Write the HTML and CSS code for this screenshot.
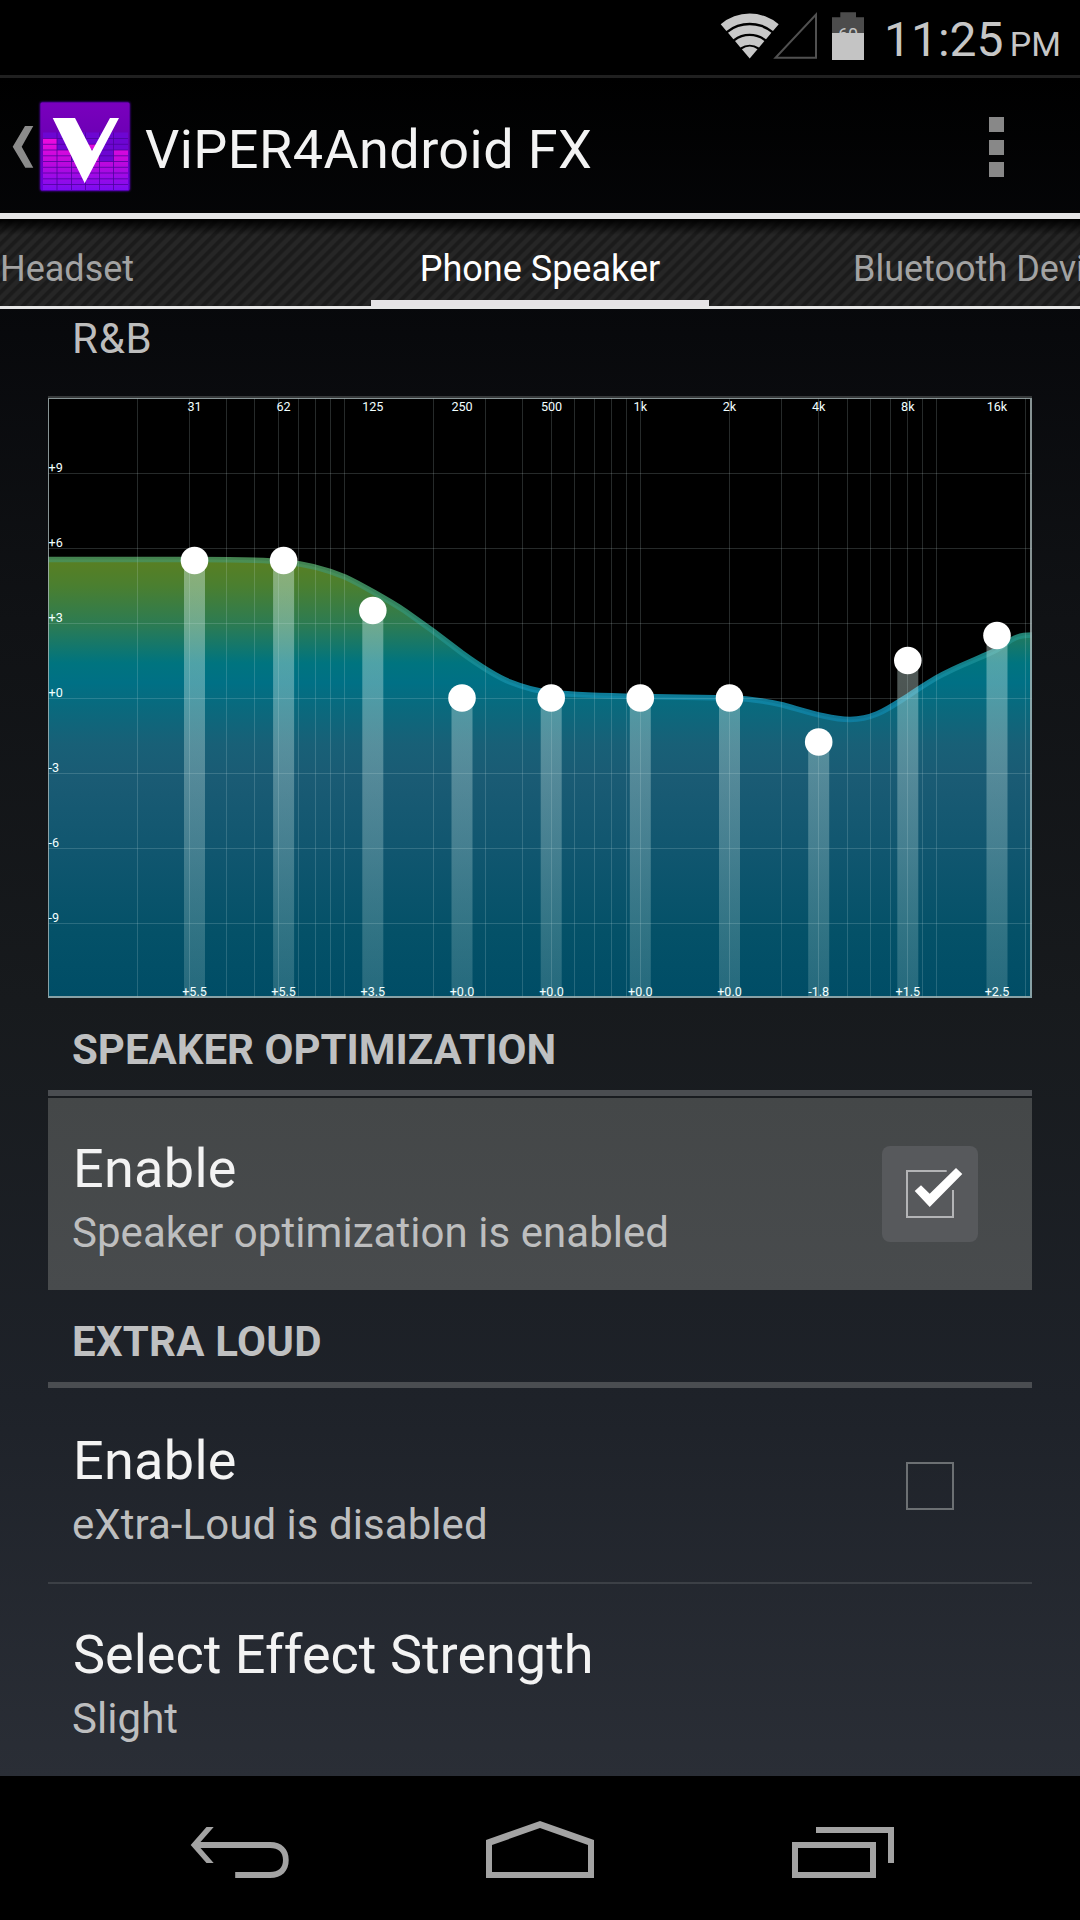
FILE: index.html
```html
<!DOCTYPE html>
<html lang="en">
<head>
<meta charset="utf-8">
<title>ViPER4Android FX</title>
<link rel="stylesheet" href="styles.css">
</head>
<body>
<div class="screen">
  <header class="status-bar">
    <svg class="status-icons" width="150" height="60" viewBox="718 0 150 60">
      <g fill="#c8c8c8">
        <path d="M720.7 24.3A44.5 44.5 0 0 1 778.7 24.3L773 31A37 37 0 0 0 726.4 31Z"/>
        <path d="M728 32.7A35 35 0 0 1 771.4 32.7L766 39.2A27 27 0 0 0 733.4 39.2Z"/>
        <path d="M735 41A24.500 24.500 0 0 1 764.400 41L759 47.500A16.500 16.500 0 0 0 740.400 47.500Z"/>
        <path d="M741.900 49.200A13 13 0 0 1 757.500 49.200L749.700 58.500Z"/>
      </g>
      <path d="M775.500 57.700H816V14.500Z" fill="none" stroke="#505050" stroke-width="2"/>
      <path d="M840.300 12.300H856V17.300H864V60H832V17.300H840.300Z" fill="#4c4c4c"/>
      <text class="battery-level" x="848" y="41" text-anchor="middle">60</text>
      <path d="M832 33H864V60H832Z" fill="#c4c4c4"/>
    </svg>
    <div class="clock">11:25<span class="meridiem">PM</span></div>
  </header>

  <div class="action-bar">
    <svg class="up-icon" width="134" height="100" viewBox="0 96 134 100">
      <defs>
        <linearGradient id="logo-bg" x1="0" y1="0" x2="0" y2="1">
          <stop offset="0" stop-color="#7a00bd"/><stop offset=".45" stop-color="#6a00b4"/><stop offset="1" stop-color="#6b00dd"/>
        </linearGradient>
        <linearGradient id="logo-bars" gradientUnits="userSpaceOnUse" x1="0" y1="138" x2="0" y2="190">
          <stop offset="0" stop-color="#f00adf"/><stop offset=".45" stop-color="#c008dc"/><stop offset="1" stop-color="#7c0cf0"/>
        </linearGradient>
        <filter id="glow" x="-10%" y="-10%" width="120%" height="120%"><feGaussianBlur stdDeviation="1.200"/></filter>
      </defs>
      <path d="M25 126H33.300L21.700 146.700L33.300 167.700H25.300L12.700 146.700Z" fill="#8b8b8b"/>
      <rect x="40" y="102" width="90" height="89" rx="2" fill="#5a00c0" filter="url(#glow)"/>
      <rect x="40.500" y="102.500" width="89" height="88" rx="1.500" fill="url(#logo-bg)"/>
      <path d="M43 132.500H128V190H43Z" fill="#6d06d2"/>
      <path d="M43 138.300H57V190H43ZM57 150H71V190H57ZM71 161H85.500V190H71ZM85.500 144H99.500V190H85.500ZM99.500 161.500H113.500V190H99.500ZM113.500 150H128V190H113.500Z" fill="url(#logo-bars)"/>
      <path d="M43 138.500H128M43 144.300H128M43 150H128M43 155.800H128M43 161.500H128M43 167.300H128M43 173H128M43 178.800H128M43 184.500H128M57 132.500V190M71.500 132.500V190M85.500 132.500V190M99.500 132.500V190M113.500 132.500V190" stroke="#4a0399" stroke-width="1" fill="none" opacity=".75"/>
      <path d="M52.700 118H75L92 151L110 118H119L84.700 183.300Z" fill="#fff"/>
    </svg>
    <h1 class="app-title">ViPER4Android FX</h1>
    <div class="overflow"><i></i><i></i><i></i></div>
  </div>

  <nav class="tabs">
    <span class="tab tab-prev">Headset</span>
    <span class="tab tab-current"><b>Phone Speaker</b></span>
    <span class="tab tab-next"><b>Bluetooth Device</b></span>
  </nav>

  <main class="content">
    <div class="preset">R&amp;B</div>
    <svg class="equalizer" width="984" height="602" viewBox="48 396 984 602">
      <defs>
        <linearGradient id="fill" gradientUnits="userSpaceOnUse" x1="0" y1="560" x2="0" y2="998">
          <stop offset="0" stop-color="#597f22"/><stop offset=".06" stop-color="#4a7f30"/>
          <stop offset=".15" stop-color="#2b7b54"/><stop offset=".235" stop-color="#00747f"/>
          <stop offset=".28" stop-color="#007085"/><stop offset=".34" stop-color="#0a697d"/>
          <stop offset=".42" stop-color="#186077"/><stop offset=".5" stop-color="#1a5b74"/>
          <stop offset=".67" stop-color="#10566f"/><stop offset=".85" stop-color="#045168"/>
          <stop offset="1" stop-color="#004d66"/>
        </linearGradient>
        <linearGradient id="line" gradientUnits="userSpaceOnUse" x1="0" y1="557" x2="0" y2="722">
          <stop offset="0" stop-color="#4b9058"/><stop offset=".3" stop-color="#379069"/>
          <stop offset=".6" stop-color="#178c90"/><stop offset=".8" stop-color="#108aa8"/><stop offset="1" stop-color="#0f7fa2"/>
        </linearGradient>
        <linearGradient id="bar" gradientUnits="userSpaceOnUse" x1="0" y1="560" x2="0" y2="998">
          <stop offset="0" stop-color="#d8f2ec" stop-opacity=".42"/><stop offset=".4" stop-color="#d8f2ec" stop-opacity=".33"/>
          <stop offset="1" stop-color="#d8f2ec" stop-opacity=".17"/>
        </linearGradient>
      </defs>
      <path d="M48 398H1032V998H48Z" fill="#000"/>
      <path d="M48 559.500H195C225 559.500 262 559.800 285 562C308 564 328 570 345 577C358 583 390 601 405 611L433 631L462 653C480 666 495 676 510 682C525 688 535 691 551 692.500C575 695 610 696 640 696.500L730 698C750 698.500 765 701 783 705C805 711 830 719.500 850 719.500C875 719.500 890 707 908 696C918 689 926 684 936 678C955 667 975 660 990 653C1002 648 1008 641 1014 638.500C1020 635.500 1026 635 1032 635V998H48Z" fill="url(#fill)"/>
      <path d="M48 559.500H195C225 559.500 262 559.800 285 562C308 564 328 570 345 577C358 583 390 601 405 611L433 631L462 653C480 666 495 676 510 682C525 688 535 691 551 692.500C575 695 610 696 640 696.500L730 698C750 698.500 765 701 783 705C805 711 830 719.500 850 719.500C875 719.500 890 707 908 696C918 689 926 684 936 678C955 667 975 660 990 653C1002 648 1008 641 1014 638.500C1020 635.500 1026 635 1032 635" fill="none" stroke="url(#line)" stroke-opacity=".9" stroke-width="5.500"/>
      <path class="grid" d="M137.500 398V998M189.500 398V998M226.500 398V998M254.500 398V998M278.500 398V998M298.500 398V998M315.500 398V998M330.500 398V998M344.500 398V998M433.500 398V998M485.500 398V998M522.500 398V998M551.500 398V998M574.500 398V998M594.500 398V998M611.500 398V998M626.500 398V998M640.500 398V998M729.500 398V998M781.500 398V998M818.500 398V998M847.500 398V998M870.500 398V998M890.500 398V998M907.500 398V998M922.500 398V998M936.500 398V998M1025.500 398V998M48 473.500H1032M48 548.500H1032M48 623.500H1032M48 698.500H1032M48 773.500H1032M48 848.500H1032M48 923.500H1032"/>
      <path fill="url(#bar)" d="M184 560.500H205V998H184ZM273.100 560.500H294.100V998H273.100ZM362.300 610.500H383.300V998H362.300ZM451.500 698H472.500V998H451.500ZM540.700 698H561.700V998H540.700ZM629.800 698H650.800V998H629.800ZM719 698H740V998H719ZM808.200 742H829.200V998H808.200ZM897.300 660.500H918.300V998H897.300ZM986.500 635.500H1007.500V998H986.500Z"/>
      <g fill="#fff">
        <circle cx="194.500" cy="560.500" r="13.800"/><circle cx="283.600" cy="560.500" r="13.800"/>
        <circle cx="372.800" cy="610.500" r="13.800"/><circle cx="462" cy="698" r="13.800"/>
        <circle cx="551.200" cy="698" r="13.800"/><circle cx="640.300" cy="698" r="13.800"/>
        <circle cx="729.500" cy="698" r="13.800"/><circle cx="818.700" cy="742" r="13.800"/>
        <circle cx="907.800" cy="660.500" r="13.800"/><circle cx="997" cy="635.500" r="13.800"/>
      </g>
      <path d="M48 396H1032V398H48Z" fill="#36393a"/>
      <path d="M48 398H1032V399H48ZM48 399H49V998H48ZM1030 399H1032V996H1030ZM49 996H1032V998H49Z" fill="#a5b3b5" fill-opacity=".82"/>
      <g class="axis" text-anchor="middle">
        <text x="194.500" y="411">31</text><text x="283.600" y="411">62</text><text x="372.800" y="411">125</text><text x="462" y="411">250</text><text x="551.500" y="411">500</text><text x="640.300" y="411">1k</text><text x="729.500" y="411">2k</text><text x="818.700" y="411">4k</text><text x="907.800" y="411">8k</text><text x="997" y="411">16k</text>
        <text x="194.500" y="996">+5.5</text><text x="283.600" y="996">+5.5</text><text x="372.800" y="996">+3.5</text><text x="462" y="996">+0.0</text><text x="551.500" y="996">+0.0</text><text x="640.300" y="996">+0.0</text><text x="729.500" y="996">+0.0</text><text x="818.700" y="996">-1.8</text><text x="907.800" y="996">+1.5</text><text x="997" y="996">+2.5</text>
      </g>
      <g class="axis">
        <text x="48.500" y="472">+9</text><text x="48.500" y="547">+6</text><text x="48.500" y="622">+3</text><text x="48.500" y="697">+0</text><text x="48.500" y="772">-3</text><text x="48.500" y="847">-6</text><text x="48.500" y="922">-9</text>
      </g>
    </svg>

    <h2 class="section">SPEAKER OPTIMIZATION</h2>
    <div class="row row-active">
      <div class="row-text">
        <div class="row-title">Enable</div>
        <div class="row-summary">Speaker optimization is enabled</div>
      </div>
      <svg class="checkbox" width="96" height="96" viewBox="882 1146 96 96">
        <rect x="882" y="1146" width="96" height="96" rx="8" fill="#57595c"/>
        <path d="M946.700 1171H907V1217H953V1190" fill="none" stroke="#b3b4b6" stroke-width="2"/>
        <path d="M914.700 1191L921 1185.300L929.700 1193.700L956 1168L962.300 1174L929.700 1207Z" fill="#fff"/>
      </svg>
    </div>

    <h2 class="section section-loud">EXTRA LOUD</h2>
    <div class="row row-divided">
      <div class="row-text">
        <div class="row-title">Enable</div>
        <div class="row-summary">eXtra-Loud is disabled</div>
      </div>
      <svg class="checkbox" width="96" height="96" viewBox="0 0 96 96">
        <rect x="25" y="25" width="46" height="46" fill="none" stroke="#6c7073" stroke-width="2"/>
      </svg>
    </div>
    <div class="row">
      <div class="row-text">
        <div class="row-title row-title-long">Select Effect Strength</div>
        <div class="row-summary">Slight</div>
      </div>
    </div>
  </main>

  <footer class="nav-bar">
    <svg width="1080" height="144" viewBox="0 1776 1080 144" fill="#a3a3a3">
      <path d="M206.500 1827H213.700L200.500 1842H270C282 1842 288.700 1849 288.700 1860S282 1878 270 1878H235.200V1872H270C278.500 1872 283 1868 283 1860S278.500 1848 270 1848H200.500L213.700 1863H206.500L190.700 1845Z"/>
      <path fill-rule="evenodd" d="M540 1821L594 1840V1878H486V1840ZM540 1828L492 1845V1872H588V1845Z"/>
      <path fill-rule="evenodd" d="M792 1842H876V1878H792ZM798 1848V1872H870V1848ZM816 1827H894V1863H888V1833H816Z"/>
    </svg>
  </footer>
</div>
</body>
</html>
```
FILE: styles.css
```css
* { box-sizing: border-box; }

body {
  margin: 0;
  background: #000;
  font-family: Roboto, "Liberation Sans", sans-serif;
  color: #f3f3f3;
}

.screen {
  width: 1080px;
  height: 1920px;
  display: flex;
  flex-direction: column;
  overflow: hidden;
  background: linear-gradient(#000 75px, #07080b 300px, #101215 620px, #171a1d 1000px, #1e2229 1400px, #2a2e36 1776px);
}

.status-bar {
  height: 78px;
  flex: none;
  display: flex;
  justify-content: flex-end;
  align-items: flex-start;
  padding-right: 19px;
  background: #000;
  border-bottom: 3px solid #202020;
}

.status-icons { margin-right: 16px; }

.battery-level { font-size: 18px; fill: #c4c4c4; }

.clock {
  width: 177px;
  display: flex;
  align-items: baseline;
  justify-content: space-between;
  font-size: 48px;
  line-height: 56px;
  padding-top: 12px;
  color: #c6c6c6;
}

.meridiem { font-size: 34px; }

.action-bar {
  height: 141px;
  flex: none;
  display: flex;
  align-items: flex-start;
  padding-right: 76px;
  border-bottom: 6px solid #e6e6e6;
}

.up-icon { margin-top: 18px; }

.app-title {
  flex: 1;
  margin: 40px 0 0 11px;
  font-size: 54px;
  font-weight: 400;
  line-height: 63px;
  letter-spacing: .42px;
}

.overflow {
  display: flex;
  flex-direction: column;
  gap: 7.5px;
  margin-top: 39px;
}

.overflow i { width: 15px; height: 15px; background: #888; }

.tabs {
  height: 90px;
  flex: none;
  display: grid;
  grid-template-columns: 371px 338px 371px;
  border-bottom: 3px solid #e6e6e6;
  background:
    linear-gradient(#000, rgba(0, 0, 0, 0) 16px),
    repeating-linear-gradient(135deg, #1b1b1b 0 2.4px, #262626 4px 7px, #1b1b1b 8.49px);
  font-size: 36px;
  line-height: 42px;
  overflow: hidden;
}

.tab { height: 90px; padding-top: 29px; white-space: nowrap; color: #a3a3a3; }
.tab b { font-weight: 400; }
.tab-current { border-bottom: 9px solid #e6e4e6; color: #fff; text-align: center; }
.tab-next { padding-left: 144px; }

.content { height: 1467px; flex: none; padding: 5px 48px 0; overflow: hidden; }

.preset {
  padding-left: 24px;
  margin-bottom: 33px;
  font-size: 42px;
  line-height: 49px;
  letter-spacing: .8px;
  color: #bdbdbd;
}

.equalizer { display: block; }

.grid { fill: none; stroke: #d0e8e8; stroke-opacity: .18; stroke-width: 1; }

.axis { font-size: 12.6px; fill: #f2ffff; }

.section {
  margin: 0 0 2px;
  padding: 27px 24px 16px;
  border-bottom: 6px solid #4a4d51;
  font-size: 42px;
  font-weight: 700;
  line-height: 49px;
  color: #bfc0c1;
}

.section-loud { letter-spacing: .25px; }

.row {
  display: flex;
  justify-content: space-between;
  align-items: center;
  height: 192px;
  padding: 0 54px 0 24px;
}

.row-active { background: linear-gradient(#444748, #484b4d); }
.row-divided { height: 194px; border-bottom: 2px solid #3c4046; }

.row-text { padding-top: 5px; }

.row-title { padding-left: 1px; font-size: 54px; line-height: 63px; margin-bottom: 8px; letter-spacing: .3px; }
.row-title-long { letter-spacing: 0; }
.row-summary { font-size: 42px; line-height: 49px; letter-spacing: .05px; color: #bdbebf; }

.nav-bar { height: 144px; flex: none; background: #000; }
.nav-bar svg { display: block; }
```
